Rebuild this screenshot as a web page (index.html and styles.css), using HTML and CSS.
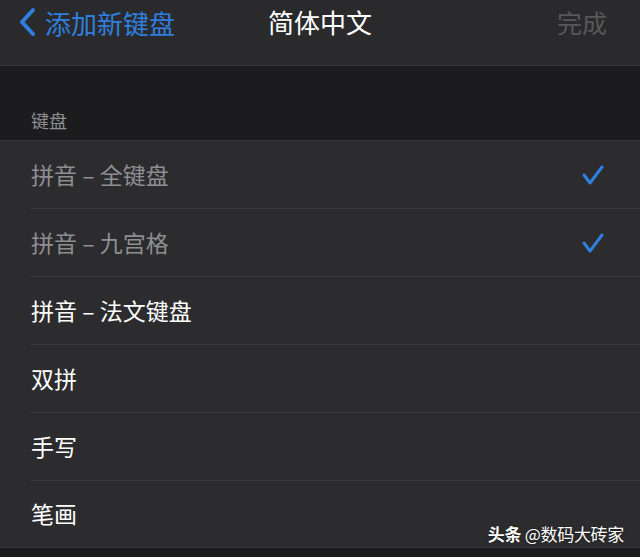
FILE: index.html
```html
<!DOCTYPE html>
<html lang="zh-CN">
<head>
    <meta charset="UTF-8">
    <meta name="viewport" content="width=device-width, initial-scale=1.0">
    <title>简体中文</title>
    <link rel="stylesheet" href="styles.css">
</head>
<body>
    <div class="nav-bar">
        <div class="nav-back">
            <svg class="chevron" width="18" height="30" viewBox="0 0 18 30">
                <path d="M15 3 L4 15 L15 27" fill="none" stroke="#2f7fdf" stroke-width="4" stroke-linecap="round" stroke-linejoin="round"/>
            </svg>
            <span>添加新键盘</span>
        </div>
        <div class="nav-title">简体中文</div>
        <div class="nav-done">完成</div>
    </div>
    <div class="section-header">键盘</div>
    <ul class="list">
        <li class="row disabled">
            <span>拼音 – 全键盘</span>
            <svg class="check" width="24" height="22" viewBox="0 0 24 22"><path d="M3 11 L9 19 L21 3" fill="none" stroke="#2f7fdf" stroke-width="3" stroke-linecap="round" stroke-linejoin="round"/></svg>
        </li>
        <li class="row disabled">
            <span>拼音 – 九宫格</span>
            <svg class="check" width="24" height="22" viewBox="0 0 24 22"><path d="M3 11 L9 19 L21 3" fill="none" stroke="#2f7fdf" stroke-width="3" stroke-linecap="round" stroke-linejoin="round"/></svg>
        </li>
        <li class="row"><span>拼音 – 法文键盘</span></li>
        <li class="row"><span>双拼</span></li>
        <li class="row"><span>手写</span></li>
        <li class="row"><span>笔画</span></li>
    </ul>
    <div class="watermark"><b>头条</b> @数码大砖家</div>
</body>
</html>
```

FILE: styles.css
```css
body {
    margin: 0;
    background-color: #1c1c1e;
    color: #ffffff;
    font-family: "Noto Sans CJK SC", "Noto Sans", sans-serif;
    height: 557px;
    overflow: hidden;
    position: relative;
}
.nav-bar {
    height: 65px;
    background-color: #2a2a2d;
    border-bottom: 1px solid #38383a;
    display: flex;
    align-items: flex-start;
    justify-content: space-between;
    padding: 0 33px 0 18px;
    position: relative;
}
.nav-back {
    display: flex;
    align-items: center;
    gap: 9px;
    color: #2f7fdf;
    font-size: 26px;
    height: 44px;
}
.nav-title {
    position: absolute;
    left: 0;
    right: 0;
    top: 0;
    height: 44px;
    line-height: 44px;
    text-align: center;
    font-size: 26px;
    pointer-events: none;
}
.nav-done {
    color: #58585b;
    font-size: 25px;
    height: 44px;
    line-height: 44px;
}
.section-header {
    height: 75px;
    box-sizing: border-box;
    padding: 0 31px 7px;
    display: flex;
    align-items: flex-end;
    color: #8d8d92;
    font-size: 18px;
    border-bottom: 1px solid #38383a;
}
.list {
    list-style: none;
    margin: 0;
    padding: 0 0 0 31px;
    background-color: #2c2c2e;
    border-bottom: 1px solid #38383a;
}
.row {
    height: 67px;
    display: flex;
    align-items: center;
    justify-content: space-between;
    padding-right: 35px;
    font-size: 23px;
    border-bottom: 1px solid #3a3a3c;
    box-sizing: content-box;
}
.row span {
    margin-top: -2px;
}
.row:last-child {
    border-bottom: none;
    height: 66px;
}
.row.disabled {
    color: #8e8e93;
}
.watermark {
    position: absolute;
    right: 16px;
    bottom: 11px;
    font-size: 17px;
    letter-spacing: -0.3px;
    color: #ffffff;
    text-shadow: 0 0 2px rgba(0, 0, 0, 0.6);
}
.watermark b {
    font-weight: 700;
}
```
